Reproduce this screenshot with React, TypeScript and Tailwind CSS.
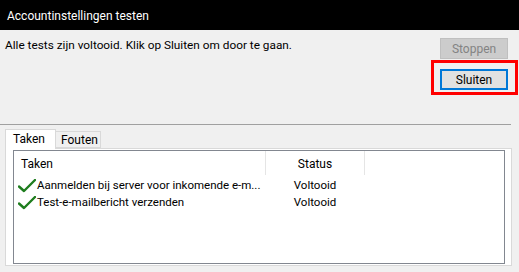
import React from 'react';

const font = { fontFamily: 'Roboto, "Segoe UI", sans-serif' };

const Check = () => (
  <svg width="18" height="14" viewBox="0 0 18 14" className="shrink-0">
    <path d="M1 7.5 L6 12 L17 1" fill="none" stroke="#1e7d1e" strokeWidth="2.4" strokeLinecap="round" strokeLinejoin="round" />
  </svg>
);

const rows = [
  { task: 'Aanmelden bij server voor inkomende e-m...', status: 'Voltooid' },
  { task: 'Test-e-mailbericht verzenden', status: 'Voltooid' },
];

export default function App() {
  return (
    <div className="w-[519px] h-[272px] bg-[#f0f0f0] flex flex-col overflow-hidden text-[12px] text-black" style={font}>
      <div className="h-[30px] bg-black text-white text-[12px] flex items-center pl-[7px] pt-[1px]">
        Accountinstellingen testen
      </div>

      <div className="flex justify-between">
        <div className="pl-[5px] pt-[6px] leading-[18px] text-[11.8px]">
          Alle tests zijn voltooid. Klik op Sluiten om door te gaan.
        </div>
        <div className="flex flex-col items-end pt-[8px]">
          <button className="mr-[11px] w-[68px] h-[21px] bg-[#cccccc] border border-[#bfbfbf] text-[#838383]">
            Stoppen
          </button>
          <div className="mr-[1px] mt-[1px] border-[3px] border-[#ff0000] pl-[6px] pr-[7px] pt-[6px] pb-[2px]">
            <button className="w-[68px] h-[21px] bg-[#e1e1e1] border-2 border-[#0078d7] leading-none">
              Sluiten
            </button>
          </div>
        </div>
      </div>

      <div className="mt-[29px] w-[511px] border-t border-[#a0a0a0]" />

      <div className="mt-[4px] pl-[5px] flex items-end">
        <div className="relative z-10 w-[51px] h-[20px] bg-white border border-b-0 border-[#d9d9d9] pl-[7px] leading-[18px]">
          Taken
        </div>
        <div className="w-[45px] h-[17px] bg-[#f0f0f0] border border-l-0 border-[#d9d9d9] pl-[5px] leading-[16px] mb-[1px]">
          Fouten
        </div>
      </div>

      <div className="ml-[5px] -mt-[1px] w-[507px] h-[118px] bg-white border border-[#d9d9d9] pl-[7px] pr-[6px] pt-[1px] pb-[1px]">
        <div className="h-full border border-[#828790] bg-white">
          <div className="flex h-[24px] items-center">
            <div className="w-[251px] pl-[7px] pt-[1px]">Taken</div>
            <div className="w-[100px] h-full border-x border-[#e5e5e5] flex items-center justify-center pt-[1px]">Status</div>
          </div>
          <div className="pt-[2px] text-[11.5px]">
            {rows.map((r) => (
              <div key={r.task} className="flex h-[17px] items-center">
                <div className="w-[251px] flex items-center pl-[4px] gap-[1px]">
                  <Check />
                  <span className="whitespace-nowrap">{r.task}</span>
                </div>
                <div className="w-[100px] text-center">{r.status}</div>
              </div>
            ))}
          </div>
        </div>
      </div>
    </div>
  );
}
